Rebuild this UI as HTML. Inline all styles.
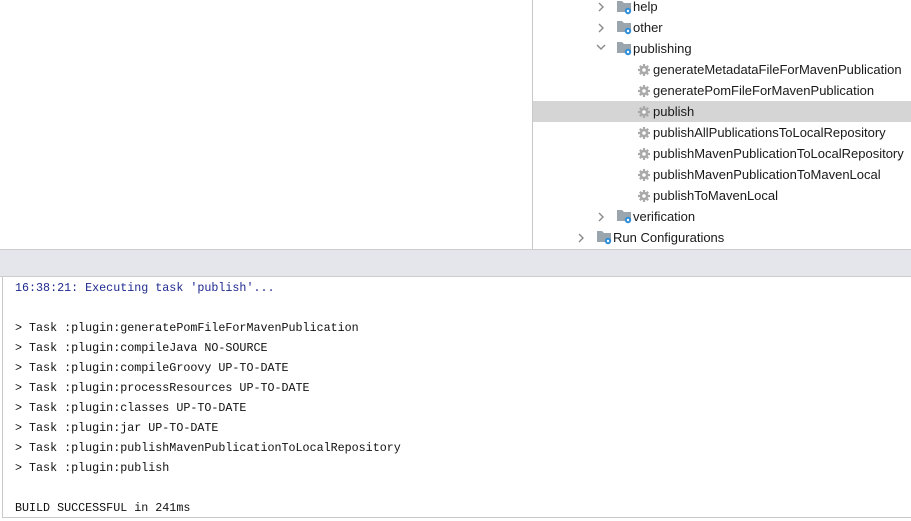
<!DOCTYPE html>
<html><head><style>
body{margin:0;width:911px;height:521px;background:#fff;position:relative;overflow:hidden;font-family:"Liberation Sans",sans-serif}
.tree{position:absolute;left:532px;top:0;width:379px;height:249px;border-left:1px solid #c9c9c9}
.row{position:absolute;left:0;width:379px;height:21px;font-size:13px;color:#1a1a1a;line-height:21px}
.row span{position:absolute;white-space:nowrap}
.sel{background:#d5d5d5}
.chev{position:absolute;width:6px;height:6px;border-right:1.5px solid #8a8a8a;border-bottom:1.5px solid #8a8a8a}
.band{position:absolute;left:0;top:249px;width:911px;height:26px;background:#e4e6eb;border-top:1px solid #cdcdcd;border-bottom:1px solid #cdcdcd}
.con{position:absolute;left:2px;top:277px;width:909px;height:240px;border-left:1px solid #c9c9c9;border-bottom:1px solid #c9c9c9}
.l{position:absolute;left:12px;font-family:"Liberation Mono",monospace;font-size:11.7px;color:#111;white-space:pre;line-height:20px}
</style></head><body>
<div class="tree">
<svg width="379" height="249" style="position:absolute;left:0;top:0">
<defs>
<g id="fold"><path d="M0 1h5l2 2h7v9H0z" fill="#9aa5ae"/><circle cx="11" cy="11" r="3.2" fill="#2f8fd8"/><circle cx="11" cy="11" r="1.2" fill="#fff"/></g>
<g id="gear"><circle cx="6" cy="6" r="4.3" fill="#a9a9a9"/><path d="M6 0v12M0 6h12M1.8 1.8l8.4 8.4M10.2 1.8l-8.4 8.4" stroke="#a9a9a9" stroke-width="2.2"/><circle cx="6" cy="6" r="1.8" fill="#fff"/></g>
</defs>
<rect x="0" y="101" width="379" height="21" fill="#d5d5d5"/>
<use href="#fold" x="84" y="0"/><use href="#fold" x="84" y="20"/><use href="#fold" x="84" y="41"/>
<use href="#gear" x="105" y="64"/><use href="#gear" x="105" y="85"/><use href="#gear" x="105" y="106"/><use href="#gear" x="105" y="127"/><use href="#gear" x="105" y="148"/><use href="#gear" x="105" y="169"/><use href="#gear" x="105" y="190"/>
<use href="#fold" x="84" y="209"/><use href="#fold" x="64" y="230"/>
<path d="M66 3l4 4-4 4M66 24l4 4-4 4M64 45l4 4 4-4M66 213l4 4-4 4M46 234l4 4-4 4" fill="none" stroke="#8a8a8a" stroke-width="1.4"/>
</svg>
<div class="row" style="top:-4px"><span style="left:100px">help</span></div>
<div class="row" style="top:17px"><span style="left:100px">other</span></div>
<div class="row" style="top:38px"><span style="left:100px">publishing</span></div>
<div class="row" style="top:59px"><span style="left:120px">generateMetadataFileForMavenPublication</span></div>
<div class="row" style="top:80px"><span style="left:120px">generatePomFileForMavenPublication</span></div>
<div class="row" style="top:101px"><span style="left:120px">publish</span></div>
<div class="row" style="top:122px"><span style="left:120px">publishAllPublicationsToLocalRepository</span></div>
<div class="row" style="top:143px"><span style="left:120px">publishMavenPublicationToLocalRepository</span></div>
<div class="row" style="top:164px"><span style="left:120px">publishMavenPublicationToMavenLocal</span></div>
<div class="row" style="top:185px"><span style="left:120px">publishToMavenLocal</span></div>
<div class="row" style="top:206px"><span style="left:100px">verification</span></div>
<div class="row" style="top:227px"><span style="left:80px">Run Configurations</span></div>
</div>
<div class="band"></div>
<div class="con">
<div class="l" style="top:1px;color:#1f2a8f">16:38:21: Executing task 'publish'...</div>
<div class="l" style="top:41px">&gt; Task :plugin:generatePomFileForMavenPublication</div>
<div class="l" style="top:61px">&gt; Task :plugin:compileJava NO-SOURCE</div>
<div class="l" style="top:81px">&gt; Task :plugin:compileGroovy UP-TO-DATE</div>
<div class="l" style="top:101px">&gt; Task :plugin:processResources UP-TO-DATE</div>
<div class="l" style="top:121px">&gt; Task :plugin:classes UP-TO-DATE</div>
<div class="l" style="top:141px">&gt; Task :plugin:jar UP-TO-DATE</div>
<div class="l" style="top:161px">&gt; Task :plugin:publishMavenPublicationToLocalRepository</div>
<div class="l" style="top:181px">&gt; Task :plugin:publish</div>
<div class="l" style="top:221px">BUILD SUCCESSFUL in 241ms</div>
</div>
</body></html>
